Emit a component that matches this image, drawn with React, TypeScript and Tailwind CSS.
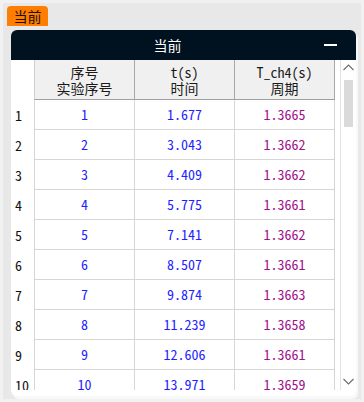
import React from 'react';

const rows = [
  { n: 1, t: '1.677', p: '1.3665' },
  { n: 2, t: '3.043', p: '1.3662' },
  { n: 3, t: '4.409', p: '1.3662' },
  { n: 4, t: '5.775', p: '1.3661' },
  { n: 5, t: '7.141', p: '1.3662' },
  { n: 6, t: '8.507', p: '1.3661' },
  { n: 7, t: '9.874', p: '1.3663' },
  { n: 8, t: '11.239', p: '1.3658' },
  { n: 9, t: '12.606', p: '1.3661' },
  { n: 10, t: '13.971', p: '1.3659' },
];

const Chevron: React.FC<{ up?: boolean }> = ({ up }) => (
  <svg width="11" height="7" viewBox="0 0 11 7" className="block">
    <path
      d={up ? 'M0.5 6 L5.5 1 L10.5 6' : 'M0.5 1 L5.5 6 L10.5 1'}
      fill="none"
      stroke="#6b6b6b"
      strokeWidth="1.1"
    />
  </svg>
);

const App: React.FC = () => {
  return (
    <div className="w-[364px] h-[402px] bg-[#f1f1f1] p-[3px] overflow-hidden font-['Noto_Sans_CJK_SC',sans-serif]">
      <div className="h-[396px] bg-[#e8e8e8] pt-[3px] pl-[4px]">
        {/* tab */}
        <div className="w-[41px] h-[20px] bg-[#ff7d00] rounded-t-[4px] flex items-center justify-center text-[14px] leading-none text-[#1a1000]">
          当前
        </div>

        {/* panel */}
        <div className="mt-[4px] ml-[4px] w-[345px] h-[366px] bg-white rounded-[6px] overflow-hidden flex flex-col shadow-[2px_3px_1px_rgba(255,255,255,0.75)]">
          <div className="h-[30px] bg-[#00111f] flex items-center shrink-0">
            <div className="flex-1 text-center text-white text-[14px] leading-none">当前</div>
            <div className="w-[13px] h-[2px] bg-white mr-[19px]" />
          </div>

          <div className="flex h-[330px]">
            {/* table */}
            <div className="w-[324px] overflow-hidden font-['Noto_Sans_Mono_CJK_SC','Noto_Sans_CJK_SC',monospace] text-[14px]">
              <div className="grid grid-cols-[23px_101px_100px_100px] h-[40px]">
                <div />
                <div className="bg-[#f0f0f0] border-l border-l-[#d0d0d0] border-r border-r-[#a8a8a8] border-b border-b-[#a0a0a0] flex flex-col items-center justify-center leading-[16px] text-[#1a1a1a]">
                  <span>序号</span>
                  <span>实验序号</span>
                </div>
                <div className="bg-[#f0f0f0] border-r border-r-[#a8a8a8] border-b border-b-[#a0a0a0] flex flex-col items-center justify-center leading-[16px] text-[#1a1a1a]">
                  <span>t(s)</span>
                  <span>时间</span>
                </div>
                <div className="bg-[#f0f0f0] border-r border-r-[#a8a8a8] border-b border-b-[#a0a0a0] flex flex-col items-center justify-center leading-[16px] text-[#1a1a1a]">
                  <span>T_ch4(s)</span>
                  <span>周期</span>
                </div>
              </div>
              {rows.map((r) => (
                <div key={r.n} className="grid grid-cols-[23px_101px_100px_100px] h-[30px]">
                  <div className="flex items-center pl-[4px] text-[#111]">{r.n}</div>
                  <div className="border-l border-r border-b border-[#d6d6d6] flex items-center justify-center text-[#1f1fff]">
                    {r.n}
                  </div>
                  <div className="border-r border-b border-[#d6d6d6] flex items-center justify-center text-[#1f1fff]">
                    {r.t}
                  </div>
                  <div className="border-r border-b border-[#d6d6d6] flex items-center justify-center text-[#a0128c]">
                    {r.p}
                  </div>
                </div>
              ))}
            </div>

            {/* scrollbar */}
            <div className="ml-[5px] w-[16px] border-l border-[#e2e2e2] flex flex-col items-center">
              <div className="h-[11px] flex items-end">
                <Chevron up />
              </div>
              <div className="mt-[9px] w-[9px] h-[47px] bg-[#dadada]" />
              <div className="flex-1" />
              <div className="h-[12px] flex items-start">
                <Chevron />
              </div>
            </div>
          </div>
        </div>
      </div>
    </div>
  );
};

export default App;
